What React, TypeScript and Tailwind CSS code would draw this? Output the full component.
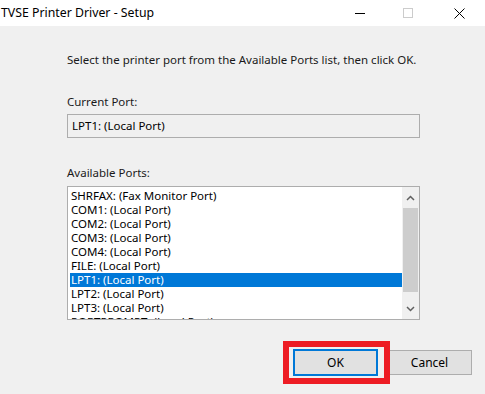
import React from 'react';

const ports = [
  'SHRFAX: (Fax Monitor Port)',
  'COM1: (Local Port)',
  'COM2: (Local Port)',
  'COM3: (Local Port)',
  'COM4: (Local Port)',
  'FILE: (Local Port)',
  'LPT1: (Local Port)',
  'LPT2: (Local Port)',
  'LPT3: (Local Port)',
  'PORTPROMPT: (Local Port)',
];

export default function App() {
  const selected = 'LPT1: (Local Port)';

  return (
    <div className="w-[485px] h-[394px] bg-[#f0f0f0] text-black overflow-hidden font-['Noto_Sans',sans-serif] text-[11.5px]">
      {/* Title bar */}
      <div className="h-[26px] bg-white flex items-center">
        <span className="flex-1 pl-[1px] text-[12.3px] leading-none">TVSE Printer Driver - Setup</span>
        <div className="w-[46px] h-full flex items-center justify-center">
          <div className="w-[10px] h-px bg-black" />
        </div>
        <div className="w-[50px] h-full flex items-center justify-center">
          <div className="w-[10px] h-[10px] border border-[#cccccc]" />
        </div>
        <div className="w-[52px] h-full flex items-center justify-center">
          <svg width="11" height="11" viewBox="0 0 11 11">
            <path d="M0.5 0.5 L10.5 10.5 M10.5 0.5 L0.5 10.5" stroke="#000" strokeWidth="1" />
          </svg>
        </div>
      </div>

      {/* Body */}
      <div className="pl-[67px] pr-[65px]">
        <p className="mt-[26px] leading-[16px] text-[#1a1a1a] whitespace-nowrap">
          Select the printer port from the Available Ports list, then click OK.
        </p>

        <p className="mt-[26px] leading-[16px] text-[#1a1a1a]">Current Port:</p>
        <div className="mt-[4px] h-[24px] border border-[#adadad] bg-[#f0f0f0] flex items-center pl-[4px] leading-none">
          LPT1: (Local Port)
        </div>

        <p className="mt-[27px] leading-[16px] text-[#1a1a1a]">Available Ports:</p>
        <div className="mt-[5px] h-[134px] border border-[#adadad] bg-white flex overflow-hidden">
          <div className="flex-1 pt-[2px] pl-[2px] overflow-hidden">
            {ports.map((p) => (
              <div
                key={p}
                className={
                  p === selected
                    ? 'h-[14px] leading-[14px] pl-[1px] bg-[#0078d7] text-white whitespace-nowrap'
                    : 'h-[14px] leading-[14px] pl-[1px] whitespace-nowrap'
                }
              >
                {p}
              </div>
            ))}
          </div>
          <div className="w-[17px] bg-[#f0f0f0] flex flex-col items-center">
            <div className="h-[21px] flex items-center justify-center">
              <svg width="9" height="6" viewBox="0 0 9 6">
                <path d="M1 5 L4.5 1.5 L8 5" stroke="#606060" strokeWidth="1.5" fill="none" />
              </svg>
            </div>
            <div className="w-[15px] h-[84px] bg-[#cdcdcd]" />
            <div className="flex-1" />
            <div className="h-[21px] flex items-center justify-center">
              <svg width="9" height="6" viewBox="0 0 9 6">
                <path d="M1 1 L4.5 4.5 L8 1" stroke="#606060" strokeWidth="1.5" fill="none" />
              </svg>
            </div>
          </div>
        </div>
      </div>

      {/* Buttons */}
      <div className="mt-[29px] flex justify-end pr-[13px] gap-[9px]">
        <div className="relative">
          <button className="w-[85px] h-[27px] bg-[#e1e1e1] border-2 border-[#0078d7] text-[12px] leading-none">
            OK
          </button>
          <div className="absolute -left-[10px] -right-[12px] -top-[8px] -bottom-[8px] border-[6px] border-[#ed1c24] pointer-events-none" />
        </div>
        <button className="w-[85px] h-[25px] mt-[1px] bg-[#e1e1e1] border border-[#adadad] text-[12px] leading-none">
          Cancel
        </button>
      </div>
    </div>
  );
}
